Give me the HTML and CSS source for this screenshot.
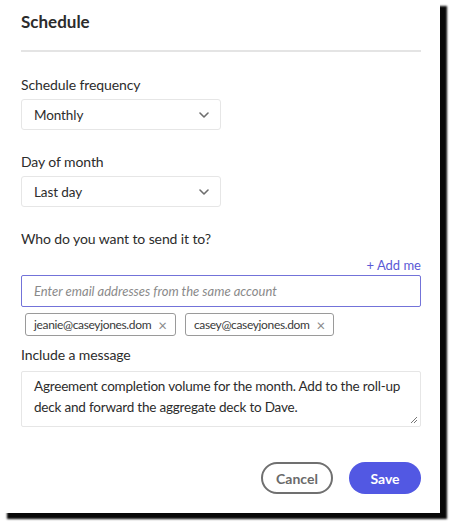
FILE: index.html
```html
<!DOCTYPE html>
<html lang="en">
<head>
<meta charset="utf-8">
<title>Schedule</title>
<link rel="stylesheet" href="styles.css">
</head>
<body>
<div class="card">
  <h1 class="title">Schedule</h1>
  <div class="divider"></div>

  <div class="field">
    <div class="label">Schedule frequency</div>
    <div class="select">
      <span>Monthly</span>
      <svg class="chev" width="10" height="6" viewBox="0 0 10 6"><path d="M1 1 L5 5 L9 1" fill="none" stroke="#6e6e6e" stroke-width="1.6" stroke-linecap="round" stroke-linejoin="round"/></svg>
    </div>
  </div>

  <div class="field">
    <div class="label">Day of month</div>
    <div class="select">
      <span>Last day</span>
      <svg class="chev" width="10" height="6" viewBox="0 0 10 6"><path d="M1 1 L5 5 L9 1" fill="none" stroke="#6e6e6e" stroke-width="1.6" stroke-linecap="round" stroke-linejoin="round"/></svg>
    </div>
  </div>

  <div class="field recip">
    <div class="label">Who do you want to send it to?</div>
    <div class="addme-row"><span class="addme">+ Add me</span></div>
    <div class="email-input">Enter email addresses from the same account</div>
    <div class="chips">
      <span class="chip">jeanie@caseyjones.dom <span class="x">×</span></span>
      <span class="chip">casey@caseyjones.dom <span class="x">×</span></span>
    </div>
  </div>

  <div class="field msg">
    <div class="label">Include a message</div>
    <div class="textarea">Agreement completion volume for the month. Add to the roll-up deck and forward the aggregate deck to Dave.
      <svg class="grip" width="8" height="8" viewBox="0 0 8 8"><path d="M1 7 L7 1 M4 7 L7 4" stroke="#666" stroke-width="0.9"/></svg>
    </div>
  </div>

  <div class="actions">
    <button class="btn cancel">Cancel</button>
    <button class="btn save">Save</button>
  </div>
</div>
</body>
</html>
```

FILE: styles.css
```css
html, body {
  margin: 0;
  padding: 0;
  background: #ffffff;
}
body {
  font-family: Lato, "Noto Sans", sans-serif;
  color: #2c2c2c;
  width: 450px;
  height: 522px;
  overflow: hidden;
}
.card {
  box-sizing: border-box;
  width: 440px;
  height: 513px;
  background: #fff;
  box-shadow: 7px 6px 2px rgba(0, 0, 0, 0.97);
  padding: 0 19px 0 21px;
  display: flex;
  flex-direction: column;
}
.title {
  margin: 0;
  padding-top: 11px;
  font-size: 17px;
  font-weight: 700;
  line-height: 22px;
  color: #2c2c2c;
}
.divider {
  height: 2px;
  background: #e4e4e4;
  margin-top: 17px;
}
.field {
  display: flex;
  flex-direction: column;
}
.label {
  font-size: 14px;
  letter-spacing: -0.1px;
  line-height: 20px;
  color: #2c2c2c;
}
.divider + .field { margin-top: 23px; }
.select {
  box-sizing: border-box;
  margin-top: 4px;
  width: 200px;
  height: 31px;
  border: 1px solid #e6e6e6;
  border-radius: 3px;
  display: flex;
  align-items: center;
  justify-content: space-between;
  padding: 0 11px 0 12px;
  font-size: 13.5px;
  letter-spacing: -0.1px;
  color: #2c2c2c;
}
.field + .field { margin-top: 22px; }
.addme-row {
  display: flex;
  justify-content: flex-end;
  margin-top: 7px;
}
.addme {
  font-size: 13px;
  line-height: 18px;
  color: #5a5ad6;
}
.email-input {
  box-sizing: border-box;
  margin-top: 1px;
  height: 32px;
  border: 1px solid #7373d9;
  border-radius: 2px;
  padding: 0 12px;
  display: flex;
  align-items: center;
  font-size: 13px;
  font-style: italic;
  color: #8a8a8a;
}
.chips {
  display: flex;
  gap: 9px;
  margin-top: 6px;
  padding-left: 4px;
}
.chip {
  box-sizing: border-box;
  height: 23px;
  border: 1px solid #9a9a9a;
  border-radius: 3px;
  padding: 0 8px 0 8px;
  display: inline-flex;
  align-items: center;
  gap: 7px;
  font-size: 12px;
  letter-spacing: -0.35px;
  color: #3a3a3a;
}
.chip .x {
  color: #8a8a8a;
  font-size: 15px;
  letter-spacing: 0;
}
.field.msg { margin-top: 9px; }
.textarea {
  position: relative;
  box-sizing: border-box;
  margin-top: 6px;
  height: 56px;
  border: 1px solid #e6e6e6;
  border-radius: 2px;
  padding: 4px 12px;
  font-size: 13.5px;
  letter-spacing: -0.2px;
  line-height: 21px;
  color: #2c2c2c;
}
.grip {
  position: absolute;
  right: 2px;
  bottom: 2px;
}
.actions {
  display: flex;
  justify-content: flex-end;
  gap: 16px;
  margin-top: 35px;
}
.btn {
  box-sizing: border-box;
  height: 32px;
  border-radius: 16px;
  font-family: inherit;
  font-size: 14px;
  font-weight: 700;
  cursor: pointer;
}
.cancel {
  width: 72px;
  background: #fff;
  border: 2px solid #707070;
  color: #6a6a6a;
}
.save {
  width: 72px;
  background: #5258e3;
  border: none;
  color: #fff;
}
```
